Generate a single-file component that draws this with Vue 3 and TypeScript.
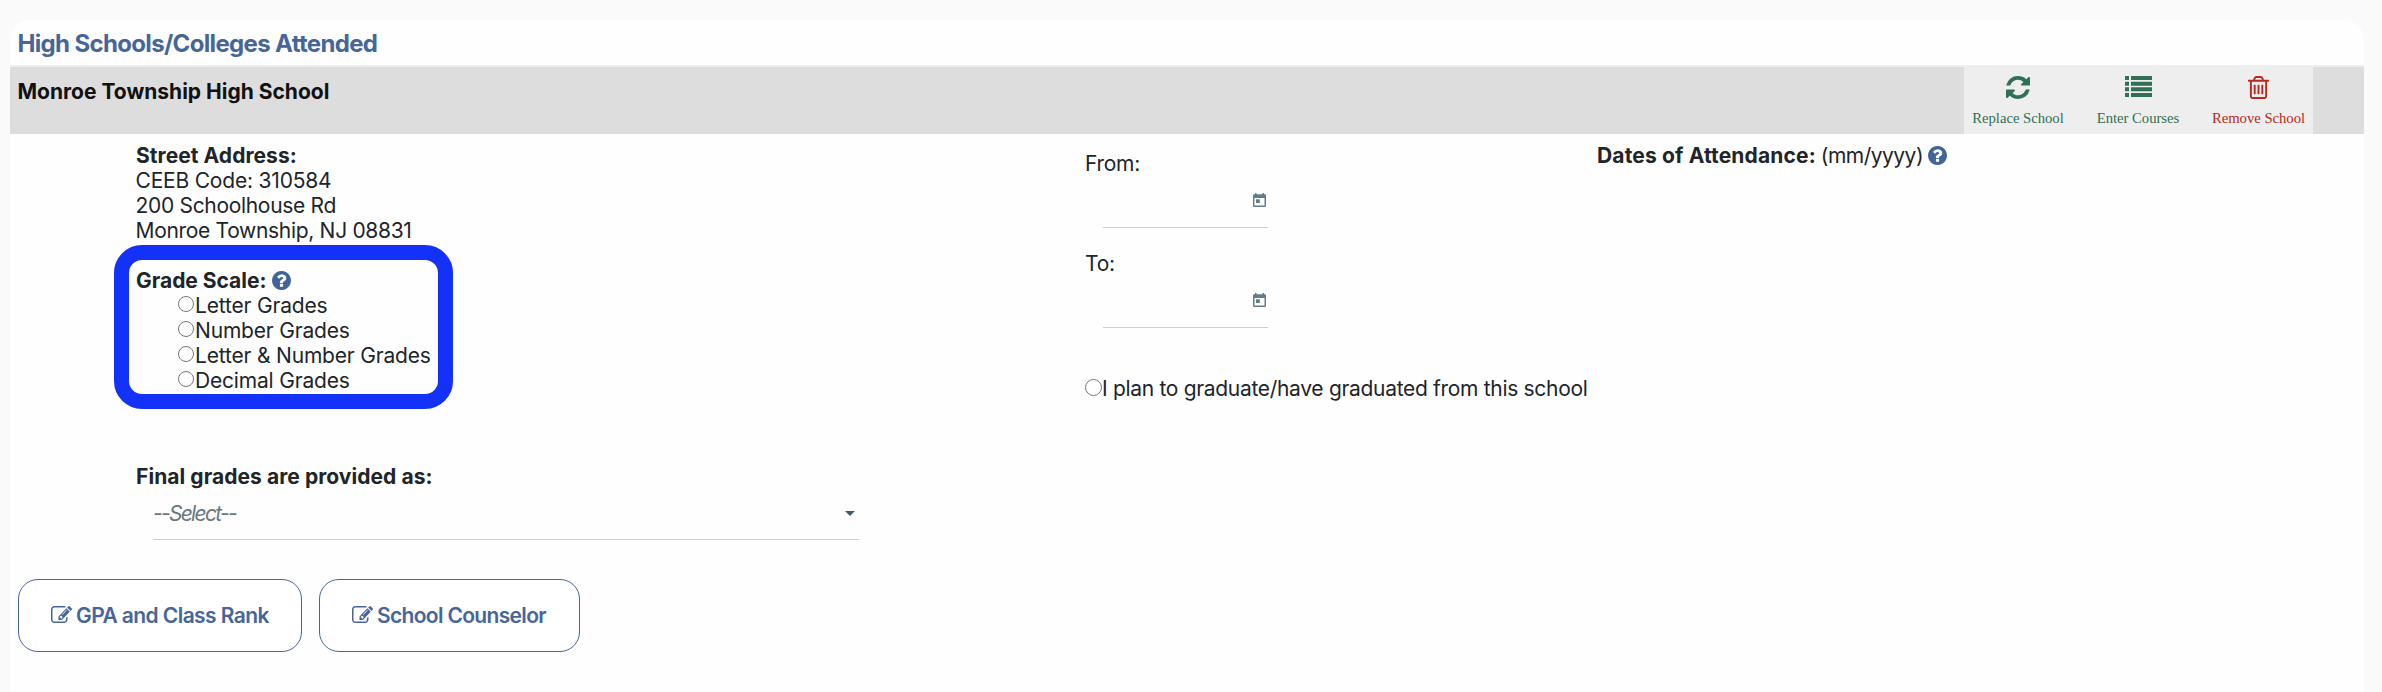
<script setup lang="ts">
import { ref } from 'vue'

const address: string[] = ['CEEB Code: 310584', '200 Schoolhouse Rd', 'Monroe Township, NJ 08831']
const scales: string[] = ['Letter Grades', 'Number Grades', 'Letter & Number Grades', 'Decimal Grades']
const dateFields: string[] = ['From:', 'To:']
const buttons: { label: string; kind: string }[] = [
  { label: 'GPA and Class Rank', kind: 'gpa' },
  { label: 'School Counselor', kind: 'counselor' },
]
const actions: { label: string; kind: string; box: string; path: string }[] = [
  {
    label: 'Replace School',
    kind: 'replace',
    box: '0 128 1536 1536',
    path: 'M1511 1056q0 5-1 7-64 268-268 434.500T764 1664q-146 0-282.500-55T238 1452l-129 129q-19 19-45 19t-45-19-19-45v-448q0-26 19-45t45-19h448q26 0 45 19t19 45-19 45l-137 137q71 66 161 102t187 36q134 0 250-65t186-179q11-17 53-117 8-23 30-23h192q13 0 22.500 9.500t9.500 22.500zm25-800v448q0 26-19 45t-45 19h-448q-26 0-45-19t-19-45 19-45l138-138Q969 384 768 384q-134 0-250 65T332 628q-11 17-53 117-8 23-30 23H50q-13 0-22.500-9.500T18 736v-7q65-268 270-434.500T768 128q146 0 284 55.500T1297 340l130-129q19-19 45-19t45 19 19 45z',
  },
  {
    label: 'Enter Courses',
    kind: 'courses',
    box: '0 0 27 21',
    path: 'M0 0h4v4H0zM6 0h21v4H6zM0 5.700h4v4H0zM6 5.700h21v4H6zM0 11.300h4v4H0zM6 11.300h21v4H6zM0 17h4v4H0zM6 17h21v4H6z',
  },
  {
    label: 'Remove School',
    kind: 'remove',
    box: '0 128 1408 1536',
    path: 'M512 736v576q0 14-9 23t-23 9h-64q-14 0-23-9t-9-23V736q0-14 9-23t23-9h64q14 0 23 9t9 23zm256 0v576q0 14-9 23t-23 9h-64q-14 0-23-9t-9-23V736q0-14 9-23t23-9h64q14 0 23 9t9 23zm256 0v576q0 14-9 23t-23 9h-64q-14 0-23-9t-9-23V736q0-14 9-23t23-9h64q14 0 23 9t9 23zm128 724V512H256v948q0 22 7 40.500t14.500 27 10.500 8.500h832q3 0 10.500-8.500t14.500-27 7-40.500zM480 384h448l-48-117q-7-9-17-11H546q-10 2-17 11zm928 32v64q0 14-9 23t-23 9h-96v948q0 83-47 143.500t-113 60.500H288q-66 0-113-58.500T128 1464V512H32q-14 0-23-9t-9-23v-64q0-14 9-23t23-9h309l70-167q15-37 54-63t79-26h320q40 0 79 26t54 63l70 167h309q14 0 23 9t9 23z',
  },
]
const helpPath =
  'M896 1376v-192q0-14-9-23t-23-9H672q-14 0-23 9t-9 23v192q0 14 9 23t23 9h192q14 0 23-9t9-23zm256-672q0-88-55.500-163T958 425t-170-41q-243 0-371 213-15 24 8 42l132 100q7 6 19 6 16 0 25-12 53-68 86-92 34-24 86-24 48 0 85.500 26t37.500 59q0 38-20 61t-68 45q-63 28-115.500 86.500T640 1020v36q0 14 9 23t23 9h192q14 0 23-9t9-23q0-19 21.500-49.500T972 957q32-18 49-28.500t46-35 44.500-48 28-60.500 12.500-81zm384 192q0 209-103 385.500T1153.500 1561 768 1664t-385.500-103T103 1281.500 0 896t103-385.500T382.500 231 768 128t385.500 103T1433 510.500 1536 896z'
const editPath =
  'M888 1184l116-116-152-152-116 116v56h96v96h56zm440-720q-16-16-33 1L945 815q-17 17-1 33t33-1l350-350q17-17 1-33zm80 594v190q0 119-84.500 203.500T1120 1536H288q-119 0-203.500-84.500T0 1248V416q0-119 84.500-203.500T288 128h832q63 0 117 25 15 7 18 23 3 17-9 29l-49 49q-14 14-32 8-23-6-45-6H288q-66 0-113 47t-47 113v832q0 66 47 113t113 47h832q66 0 113-47t47-113v-126q0-13 9-22l64-64q15-15 35-7t20 29zm-96-738l288 288-672 672H640V992zm444 132l-92 92-288-288 92-92q28-28 68-28t68 28l152 152q28 28 28 68t-28 68z'

const scale = ref<string>('')
const graduated = ref<boolean>(false)
</script>

<template>
  <main class="page">
    <section class="card">
      <h1 class="title">High Schools/Colleges Attended</h1>
      <header class="bar">
        <h2 class="school">Monroe Township High School</h2>
        <nav class="actions">
          <a v-for="a in actions" :key="a.kind" :class="['action', a.kind]">
            <svg :viewBox="a.box" preserveAspectRatio="none"><path :d="a.path" /></svg>
            <span>{{ a.label }}</span>
          </a>
        </nav>
      </header>

      <div class="body">
        <div class="details">
          <strong>Street Address:</strong>
          <div v-for="line in address" :key="line" class="line">{{ line }}</div>
          <fieldset class="scale">
            <div class="scale-head">
              <strong>Grade Scale:</strong>
              <svg class="help" viewBox="0 128 1536 1536"><path :d="helpPath" /></svg>
            </div>
            <label v-for="s in scales" :key="s" class="option">
              <input v-model="scale" class="radio" type="radio" name="scale" :value="s" />{{ s }}
            </label>
          </fieldset>
          <strong class="final">Final grades are provided as:</strong>
          <div class="select"><em>--Select--</em><i class="caret"></i></div>
        </div>

        <div class="dates">
          <div v-for="f in dateFields" :key="f" class="date">
            <div>{{ f }}</div>
            <div class="date-input">
              <svg viewBox="0 0 13 14">
                <path fill-rule="evenodd" d="M2 0h1.500v1.200h6V0H11v1.200h.8Q13 1.200 13 2.400v10.400Q13 14 11.800 14H1.200Q0 14 0 12.800V2.400Q0 1.200 1.200 1.200H2zM1.500 5v7.600h10V5zM3 6.300h3.800V10H3z" />
              </svg>
            </div>
          </div>
          <label class="plan">
            <input v-model="graduated" class="radio" type="radio" name="graduated" :value="true" />I plan to graduate/have graduated from this school
          </label>
        </div>

        <div class="attendance">
          <strong>Dates of Attendance:</strong>
          <span class="format">(mm/yyyy)</span>
          <svg class="help" viewBox="0 128 1536 1536"><path :d="helpPath" /></svg>
        </div>
      </div>

      <footer class="buttons">
        <button v-for="b in buttons" :key="b.kind" :class="['button', b.kind]" type="button">
          <svg viewBox="0 128 1792 1408" preserveAspectRatio="none"><path :d="editPath" /></svg>
          <span>{{ b.label }}</span>
        </button>
      </footer>
    </section>
  </main>
</template>

<style>
body { background: #fafafa; }
</style>

<style scoped>
.page {
  box-sizing: border-box;
  height: 692px;
  padding: 20px 18px 0 10px;
  overflow: hidden;
  background: #fafafa;
  color: #212529;
  font: 400 21px/25px Inter, "Open Sans", sans-serif;
  letter-spacing: -0.27px;
  white-space: nowrap;
}
svg { display: block; fill: currentColor; flex: none; }
strong { font-weight: 700; letter-spacing: 0.06px; }
.card { height: 672px; background: #fefefe; border-radius: 20px 20px 0 0; }
.title {
  box-sizing: border-box;
  height: 45px;
  margin: 0;
  padding: 9px 0 0 7.5px;
  color: #466699;
  font-size: 24px;
  line-height: 30px;
  font-weight: 700;
  letter-spacing: -0.66px;
}
.bar {
  box-sizing: border-box;
  display: flex;
  justify-content: space-between;
  height: 69px;
  padding-right: 51px;
  border-top: 2px solid #eee;
  background: #ddd;
}
.school { margin: 12px 0 0 7.5px; color: #111; font-size: 21px; line-height: 25px; font-weight: 700; letter-spacing: 0; }
.actions { display: flex; width: 349px; background: #eee; color: #317056; }
.action {
  display: flex;
  flex-direction: column;
  align-items: center;
  width: 108px;
  padding-top: 9px;
  font: 14.7px/18px "Liberation Serif", serif;
  letter-spacing: -0.02px;
}
.action.courses { width: 132px; }
.action.remove { width: 109px; color: #b8281c; }
.action svg { width: 24px; height: 23px; margin-bottom: 10px; }
.action.courses svg { width: 27px; height: 21px; margin-bottom: 12px; }
.action.remove svg { width: 21px; }

.body { display: flex; height: 445px; }
.details { width: 950px; padding: 9px 0 0 126px; box-sizing: border-box; }
.details > strong { display: block; }
.line { margin-left: -0.5px; letter-spacing: -0.31px; }
.line:nth-child(2) { letter-spacing: -0.2px; }
.scale {
  box-sizing: border-box;
  width: 339px;
  height: 164px;
  margin: 2px 0 0 -22px;
  padding: 8px 0 0 7px;
  border: 15px solid #1431f8;
  border-radius: 28px;
}
.scale-head { display: flex; align-items: center; gap: 6px; height: 25px; }
.scale-head strong { letter-spacing: -0.02px; }
.help { width: 19px; height: 19px; margin-top: -1px; color: #416499; }
.option, .plan { display: flex; align-items: center; letter-spacing: -0.18px; }
.option { height: 25px; padding-left: 42px; }
.radio {
  appearance: none;
  box-sizing: border-box;
  width: 16px;
  height: 16px;
  margin: -3px 1px 0 0;
  border: 1px solid #767676;
  border-radius: 50%;
  background: #fff;
}
.details .final { margin-top: 55px; }
.select {
  box-sizing: border-box;
  display: flex;
  align-items: center;
  justify-content: space-between;
  width: 706px;
  height: 51px;
  margin-left: 17px;
  padding: 0 3px 1px 0;
  border-bottom: 1px solid #cbd0d2;
}
.select em { color: #69797f; letter-spacing: -1.7px; }
.caret { border: 5px solid transparent; border-top: 5px solid #455a64; border-bottom: 0; margin-right: 1px; }

.dates { width: 637px; padding: 17px 0 0 125px; box-sizing: border-box; }
.date { height: 100px; }
.date-input {
  box-sizing: border-box;
  display: flex;
  justify-content: flex-end;
  width: 165px;
  height: 52px;
  margin-left: 18px;
  padding: 17px 2px 0 0;
  border-bottom: 1px solid #cbd0d2;
  color: #607d8b;
}
.date-input svg { width: 13px; height: 14px; }
.plan { height: 25px; margin-top: 25px; letter-spacing: -0.31px; }
.plan .radio { width: 17px; height: 17px; margin-right: 0; }
.attendance { display: flex; height: 25px; align-items: center; margin-top: 9px; }
.attendance strong { letter-spacing: 0.15px; }
.format { margin: 0 5px; letter-spacing: -0.52px; }

.buttons { display: flex; gap: 17px; padding-left: 8px; }
.button {
  box-sizing: border-box;
  display: flex;
  align-items: center;
  width: 284px;
  height: 73px;
  padding: 0 0 0 32px;
  border: 1px solid #466699;
  border-radius: 20px;
  background: #fff;
  color: #466699;
  font: 600 21px/25px Inter, sans-serif;
  letter-spacing: -0.58px;
}
.button.counselor { width: 261px; letter-spacing: -0.67px; }
.button svg { width: 21px; height: 17px; margin: -3px 4px 0 0; }
</style>
